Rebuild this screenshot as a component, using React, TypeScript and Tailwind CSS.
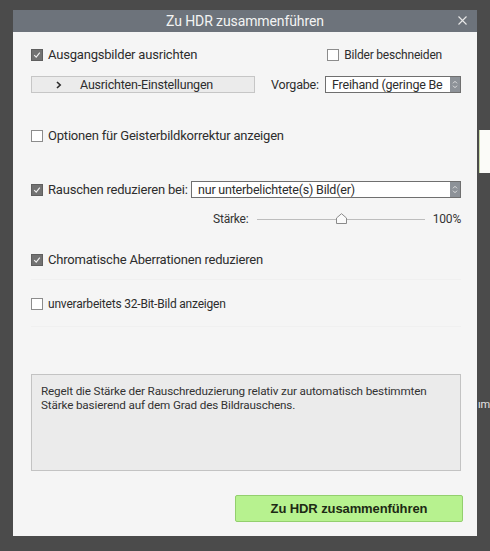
import React from "react";

const FONT = { fontFamily: "Roboto, 'Liberation Sans', sans-serif" };

function Check({ checked }: { checked?: boolean }) {
  return checked ? (
    <span className="flex h-[12px] w-[12px] shrink-0 items-center justify-center border border-[#5f5f5f] bg-[#727272]">
      <svg width="8" height="8" viewBox="0 0 8 8">
        <path d="M1.2 4.2 L3.2 6.2 L6.8 1.6" fill="none" stroke="#f2f2f2" strokeWidth="1.1" />
      </svg>
    </span>
  ) : (
    <span className="h-[12px] w-[12px] shrink-0 border border-[#8c8c8c] bg-white" />
  );
}

function Stepper() {
  return (
    <span className="flex h-full w-[10px] shrink-0 flex-col items-center justify-center bg-[#8d9298]">
      <svg width="6" height="9" viewBox="0 0 6 9">
        <path d="M1 3.3 L3 1.3 L5 3.3" fill="none" stroke="#e6e6e6" strokeWidth="0.9" />
        <path d="M1 5.7 L3 7.7 L5 5.7" fill="none" stroke="#e6e6e6" strokeWidth="0.9" />
      </svg>
    </span>
  );
}

export default function App() {
  return (
    <div
      className="relative h-[551px] w-[490px] overflow-hidden bg-[#4b4b4b] pl-[13px] pt-[10px]"
      style={FONT}
    >
      {/* desktop items peeking from behind the window */}
      <div className="absolute left-[479px] top-[130px] h-[43px] w-[14px] border-l border-[#c8d8a8] bg-[#fbfbf8]" />
      <div className="absolute left-[478px] top-[398px] text-[11px] leading-[14px] tracking-[-0.3px] text-[#e6e6e6]">ım</div>

      <div className="relative flex h-[526px] w-[464px] flex-col bg-[#f5f5f5]">
        {/* title bar */}
        <div className="relative flex h-[22px] items-center justify-center bg-[#6d737b]">
          <span className="text-[14px] leading-[16px] tracking-[-0.1px] text-[#f3f3f3]">
            Zu HDR zusammenführen
          </span>
          <svg className="absolute right-[10px] top-[6px]" width="9" height="9" viewBox="0 0 9 9">
            <path d="M0.5 0.5 L8.5 8.5 M8.5 0.5 L0.5 8.5" stroke="#e8e8e8" strokeWidth="1.1" />
          </svg>
        </div>

        <div className="flex flex-1 flex-col pl-[18px] pr-[16px] pt-[15px] text-[13px] leading-[16px] tracking-[-0.2px] text-[#2d2d2d]">
          {/* align row */}
          <div className="flex h-[16px] items-center">
            <Check checked />
            <span className="ml-[5px]">Ausgangsbilder ausrichten</span>
            <div className="ml-auto flex items-center pr-[19px]">
              <Check />
              <span className="ml-[5px] text-[12px]">Bilder beschneiden</span>
            </div>
          </div>

          <div className="mt-[13px] flex h-[17px] items-center">
            <div className="flex h-[17px] w-[224px] items-center border border-[#c6c6c6] bg-[#ebebeb] pl-[24px] text-[12.5px]">
              <svg width="6" height="8" viewBox="0 0 6 8">
                <path d="M1 1 L4.2 4 L1 7" fill="none" stroke="#2a2a2a" strokeWidth="1.6" />
              </svg>
              <span className="ml-[18px]">Ausrichten-Einstellungen</span>
            </div>
            <span className="ml-[16px] text-[12.5px]">Vorgabe:</span>
            <div className="ml-auto flex h-[17px] w-[136px] items-center border border-[#6f6f6f] bg-white">
              <span className="flex-1 whitespace-nowrap pl-[6px] text-[12.5px]">Freihand (geringe Be</span>
              <Stepper />
            </div>
          </div>

          <div className="mt-[35px] flex h-[16px] items-center">
            <Check />
            <span className="ml-[5px]">Optionen für Geisterbildkorrektur anzeigen</span>
          </div>

          <div className="mt-[37px] flex h-[17px] items-center">
            <Check checked />
            <span className="ml-[5px]">Rauschen reduzieren bei:</span>
            <div className="ml-auto flex h-[17px] w-[270px] items-center border border-[#6f6f6f] bg-white">
              <span className="flex-1 pl-[6px] text-[12.5px]">nur unterbelichtete(s) Bild(er)</span>
              <Stepper />
            </div>
          </div>

          <div className="mt-[13px] flex h-[16px] items-center text-[12px] text-[#333]">
            <span className="ml-[182px]">Stärke:</span>
            <div className="relative ml-[9px] flex h-[16px] w-[168px] items-center">
              <div className="h-px w-full bg-[#bdbdbd]" />
              <svg className="absolute left-[79px] top-[2px]" width="11" height="11" viewBox="0 0 11 11">
                <path d="M0.5 5 L5.5 0.7 L10.5 5 L10.5 10.5 L0.5 10.5 Z" fill="#fafafa" stroke="#8a8a8a" strokeWidth="1" />
              </svg>
            </div>
            <span className="ml-auto">100%</span>
          </div>

          <div className="mt-[25px] flex h-[16px] items-center">
            <Check checked />
            <span className="ml-[5px]">Chromatische Aberrationen reduzieren</span>
          </div>

          <div className="mt-[11px] h-px bg-[#f0f0f0]" />

          <div className="mt-[16px] flex h-[16px] items-center">
            <Check />
            <span className="ml-[5px] text-[12px]">unverarbeitets 32-Bit-Bild anzeigen</span>
          </div>

          <div className="mt-[14px] h-px bg-[#f0f0f0]" />

          <div className="mt-[47px] h-[97px] border border-[#c3c3c3] bg-[#ebebeb] pl-[9px] pt-[9px] text-[11.7px] leading-[14px] tracking-[-0.15px] text-[#333]">
            Regelt die Stärke der Rauschreduzierung relativ zur automatisch bestimmten
            <br />
            Stärke basierend auf dem Grad des Bildrauschens.
          </div>

          <div className="mt-[24px] flex justify-end">
            <button
              className="-mr-[2px] flex h-[27px] w-[228px] items-center justify-center rounded-[2px] border border-[#93cf6e] bg-[#b7f28f] text-[13px] font-bold tracking-[-0.1px] text-[#1d2a14]"
              style={{ fontFamily: "'Liberation Sans', sans-serif" }}
            >
              Zu HDR zusammenführen
            </button>
          </div>
        </div>
      </div>
    </div>
  );
}
